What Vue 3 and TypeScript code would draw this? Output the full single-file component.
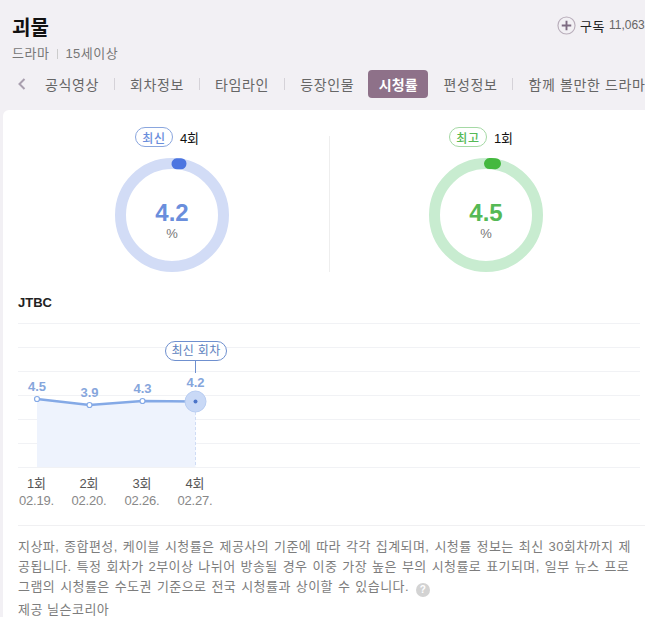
<script setup lang="ts">
const tabs = ['공식영상', '회차정보', '타임라인', '등장인물', '시청률', '편성정보', '함께 볼만한 드라마']
const activeTab = '시청률'

const stats = [
  { key: 'latest', badge: '최신', ep: '4회', value: '4.2', arc: 'M62 5.8A51.5 51.5 0 0 1 66 5.7' },
  { key: 'best', badge: '최고', ep: '1회', value: '4.5', arc: 'M60.5 5.6A51.5 51.5 0 0 1 66.5 5.7' },
]

const gridY = [0, 24, 48, 72, 96, 120, 144]
const points = [
  { x: 19, y: 76, labelY: 68, value: '4.5', ep: '1회', date: '02.19.' },
  { x: 71.5, y: 82, labelY: 74, value: '3.9', ep: '2회', date: '02.20.' },
  { x: 124.5, y: 78, labelY: 70, value: '4.3', ep: '3회', date: '02.26.' },
  { x: 177.5, y: 78.5, labelY: 64, value: '4.2', ep: '4회', date: '02.27.' },
]
const line = points.map((p) => `${p.x},${p.y}`).join(' ')
const area = `${points[0].x},144 ${line} ${points[3].x},144`
</script>

<template>
  <main class="page">
    <header class="head">
      <div class="head-copy">
        <h1 class="title">괴물</h1>
        <p class="meta">드라마<i class="meta-sep"></i>15세이상</p>
      </div>
      <div class="subscribe">
        <svg class="plus" viewBox="0 0 20 20" aria-hidden="true">
          <circle cx="10" cy="10" r="9" fill="none" stroke="#b9aebb" stroke-width="1.2" />
          <path d="M10 5v10M5 10h10" stroke="#7d6b82" stroke-width="2" />
        </svg>
        <span class="sub-label">구독</span>
        <span class="sub-count">11,063</span>
      </div>
    </header>

    <nav class="tabs">
      <svg class="tabs-prev" viewBox="0 0 10 14" aria-hidden="true">
        <path d="M7.5 2 2.5 7l5 5" fill="none" stroke="#a99fae" stroke-width="2" />
      </svg>
      <template v-for="(tab, i) in tabs" :key="tab">
        <span :class="['tab', { 'tab--active': tab === activeTab }]">{{ tab }}</span>
        <i v-if="i < tabs.length - 1 && tab !== activeTab && tabs[i + 1] !== activeTab" class="tab-sep"></i>
      </template>
    </nav>

    <section class="card">
      <div class="stats">
        <div v-for="s in stats" :key="s.key" :class="['stat', `stat--${s.key}`]">
          <div class="stat-head">
            <span class="badge">{{ s.badge }}</span>
            <span class="stat-ep">{{ s.ep }}</span>
          </div>
          <div class="ring">
            <svg viewBox="0 0 114 114" aria-hidden="true">
              <circle class="ring-track" cx="57" cy="57" r="51.5" />
              <path class="ring-arc" :d="s.arc" />
            </svg>
            <div class="ring-copy">
              <strong class="ring-value">{{ s.value }}</strong>
              <span class="ring-unit">%</span>
            </div>
          </div>
        </div>
      </div>

      <h2 class="channel">JTBC</h2>

      <svg class="chart" viewBox="0 0 622 190" aria-label="회차별 시청률">
        <line v-for="y in gridY" :key="y" class="grid" x1="0" x2="622" :y1="y + 0.5" :y2="y + 0.5" />
        <polygon class="area" :points="area" />
        <line class="guide-dash" x1="177.5" x2="177.5" y1="84" y2="144" />
        <line class="guide" x1="177.5" x2="177.5" y1="38" y2="50" />
        <polyline class="trend" :points="line" />
        <circle class="halo" cx="177.5" cy="78.5" r="10.5" />
        <circle class="halo-dot" cx="177.5" cy="78.5" r="2" />
        <template v-for="(p, i) in points" :key="p.ep">
          <circle v-if="i < 3" class="pt" :cx="p.x" :cy="p.y" r="2.5" />
          <text class="val" :x="p.x" :y="p.labelY">{{ p.value }}</text>
          <text class="ep" :x="p.x - 0.5" y="165">{{ p.ep }}</text>
          <text class="date" :x="p.x - 0.5" y="182">{{ p.date }}</text>
        </template>
        <rect class="tip" x="147.5" y="18.5" width="61" height="19" rx="9.5" />
        <text class="tip-text" x="178" y="32">최신 회차</text>
      </svg>

      <footer class="note">
        <p class="note-text">
          지상파, 종합편성, 케이블 시청률은 제공사의 기준에 따라 각각 집계되며, 시청률 정보는 최신 30회차까지 제<br />공됩니다. 특정 회차가 2부이상 나뉘어 방송될 경우 이중 가장 높은 부의 시청률로 표기되며, 일부 뉴스 프로<br />그램의 시청률은 수도권 기준으로 전국 시청률과 상이할 수 있습니다.
          <span class="help">?</span>
        </p>
        <p class="source">제공 닐슨코리아</p>
      </footer>
    </section>
  </main>
</template>

<style>
html,
body {
  margin: 0;
  height: 100%;
  overflow: hidden;
  background: #f2f0f4;
}
</style>

<style scoped>
.page {
  width: 645px;
  height: 617px;
  overflow: hidden;
  background: #f2f0f4;
  font-family: 'Liberation Sans', 'Noto Sans CJK KR', sans-serif;
  color: #222;
}

.head {
  display: flex;
  justify-content: space-between;
  padding: 16px 0 0 12px;
  height: 46px;
}

.title {
  margin: 0;
  font-size: 20px;
  line-height: 25px;
  font-weight: 700;
  color: #111;
}

.meta {
  margin: 4px 0 0;
  display: flex;
  align-items: center;
  font-size: 13px;
  line-height: 18px;
  letter-spacing: 0.5px;
  color: #777;
}

.meta-sep {
  width: 1px;
  height: 10px;
  margin: 0 7px 0 8px;
  background: #ccc;
}

.subscribe {
  display: flex;
  align-items: center;
  align-self: flex-start;
  flex: none;
  width: 88px;
  height: 20px;
  margin-top: -1px;
  white-space: nowrap;
}

.plus {
  width: 19px;
  height: 19px;
  flex: none;
}

.sub-label {
  margin-left: 4px;
  font-size: 13px;
  letter-spacing: 0.5px;
  color: #222;
}

.sub-count {
  margin-left: 4px;
  font-size: 12px;
  color: #666;
}

.tabs {
  display: flex;
  align-items: center;
  height: 28px;
  margin-top: 8px;
  padding-left: 17px;
  white-space: nowrap;
  overflow: hidden;
}

.tabs-prev {
  width: 10px;
  height: 14px;
  flex: none;
  margin-right: 18px;
}

.tab {
  flex: none;
  font-size: 14px;
  letter-spacing: 0.63px;
  color: #666;
}

.tab--active {
  display: flex;
  align-items: center;
  height: 28px;
  padding: 0 10.5px;
  margin: 0 15px 0 14px;
  border-radius: 4px;
  background: #8e7189;
  color: #fff;
  font-weight: 700;
  letter-spacing: 0.2px;
}

.tab-sep {
  flex: none;
  width: 1px;
  height: 12px;
  margin: 0 15px;
  background: #d5d2d8;
}

.card {
  margin: 12px 0 0 3px;
  padding: 26px 0 0 15px;
  height: 520px;
  box-sizing: border-box;
  background: #fff;
  border-radius: 6px 0 0 0;
}

.stats {
  display: grid;
  grid-template-columns: 314px 314px;
  margin-left: -3px;
}

.stat {
  display: flex;
  flex-direction: column;
  align-items: center;
  height: 136px;
}

.stat + .stat {
  border-left: 1px solid #eee;
  padding-right: 1px;
}

.stat--latest {
  --accent: #4c75e0;
  --track: #d2dcf6;
  --text: #6a8edc;
  --line: #8aa6de;
}

.stat--best {
  --accent: #44b83f;
  --track: #c8ecd0;
  --text: #55b955;
  --line: #a5d9a5;
}

.stat-head {
  display: flex;
  align-items: center;
  gap: 7px;
  height: 20px;
  margin: -9px 10px 0 0;
}

.badge {
  display: flex;
  align-items: center;
  justify-content: center;
  width: 38px;
  height: 20px;
  box-sizing: border-box;
  border: 1px solid var(--line);
  border-radius: 10px;
  font-size: 12px;
  font-weight: 500;
  letter-spacing: 0.5px;
  color: var(--text);
}

.stat-ep {
  font-size: 13px;
  color: #111;
}

.ring {
  position: relative;
  width: 114px;
  height: 114px;
  margin-top: 11px;
}

.ring svg {
  display: block;
  width: 114px;
  height: 114px;
}

.ring-track {
  fill: none;
  stroke: var(--track);
  stroke-width: 11px;
}

.ring-arc {
  fill: none;
  stroke: var(--accent);
  stroke-width: 11px;
  stroke-linecap: round;
}

.ring-copy {
  position: absolute;
  inset: 0;
  padding-top: 11px;
  box-sizing: border-box;
  display: flex;
  flex-direction: column;
  align-items: center;
  justify-content: center;
}

.ring-value {
  font-size: 24px;
  line-height: 26px;
  font-weight: 700;
  color: var(--text);
}

.ring-unit {
  font-size: 13px;
  line-height: 16px;
  color: #777;
}

.channel {
  margin: 22px 0 0;
  font-size: 13px;
  line-height: 18px;
  font-weight: 700;
  color: #222;
}

.chart {
  display: block;
  width: 622px;
  height: 190px;
  margin-top: 11px;
  font-family: 'Liberation Sans', 'Noto Sans CJK KR', sans-serif;
}

.grid {
  stroke: #f1f2f5;
}

.area {
  fill: #eef3fd;
}

.guide {
  stroke: #6f90cf;
}

.guide-dash {
  stroke: #cfdcf5;
  stroke-dasharray: 3 2;
}

.trend {
  fill: none;
  stroke: #84a9e6;
  stroke-width: 2.5px;
}

.halo {
  fill: #c9d9f6;
  stroke: #b8cdf2;
}

.halo-dot {
  fill: #4c75c8;
}

.pt {
  fill: #fff;
  stroke: #84a9e6;
  stroke-width: 1.2px;
}

.val {
  font-size: 13px;
  font-weight: 700;
  fill: #86a6dc;
  text-anchor: middle;
}

.ep {
  font-size: 13px;
  fill: #555;
  text-anchor: middle;
}

.date {
  font-size: 13px;
  letter-spacing: -0.2px;
  fill: #888;
  text-anchor: middle;
}

.tip {
  fill: #fff;
  stroke: #6f90cf;
}

.tip-text {
  font-size: 12px;
  letter-spacing: 0.3px;
  fill: #5d7fbe;
  text-anchor: middle;
}

.note {
  margin-top: 12px;
  padding-top: 11px;
  border-top: 1px solid #f0f0f2;
}

.note-text {
  margin: 0;
  white-space: nowrap;
  font-size: 13px;
  line-height: 20px;
  letter-spacing: 0.42px;
  word-spacing: 1px;
  color: #7d7d7d;
}

.help {
  display: inline-flex;
  align-items: center;
  justify-content: center;
  width: 14px;
  height: 14px;
  margin-left: 2px;
  border-radius: 50%;
  background: #d3d3d3;
  color: #fff;
  font-size: 10px;
  font-weight: 700;
  vertical-align: -2px;
}

.source {
  margin: 3px 0 0;
  font-size: 13px;
  line-height: 20px;
  letter-spacing: 0.5px;
  color: #7d7d7d;
}
</style>
